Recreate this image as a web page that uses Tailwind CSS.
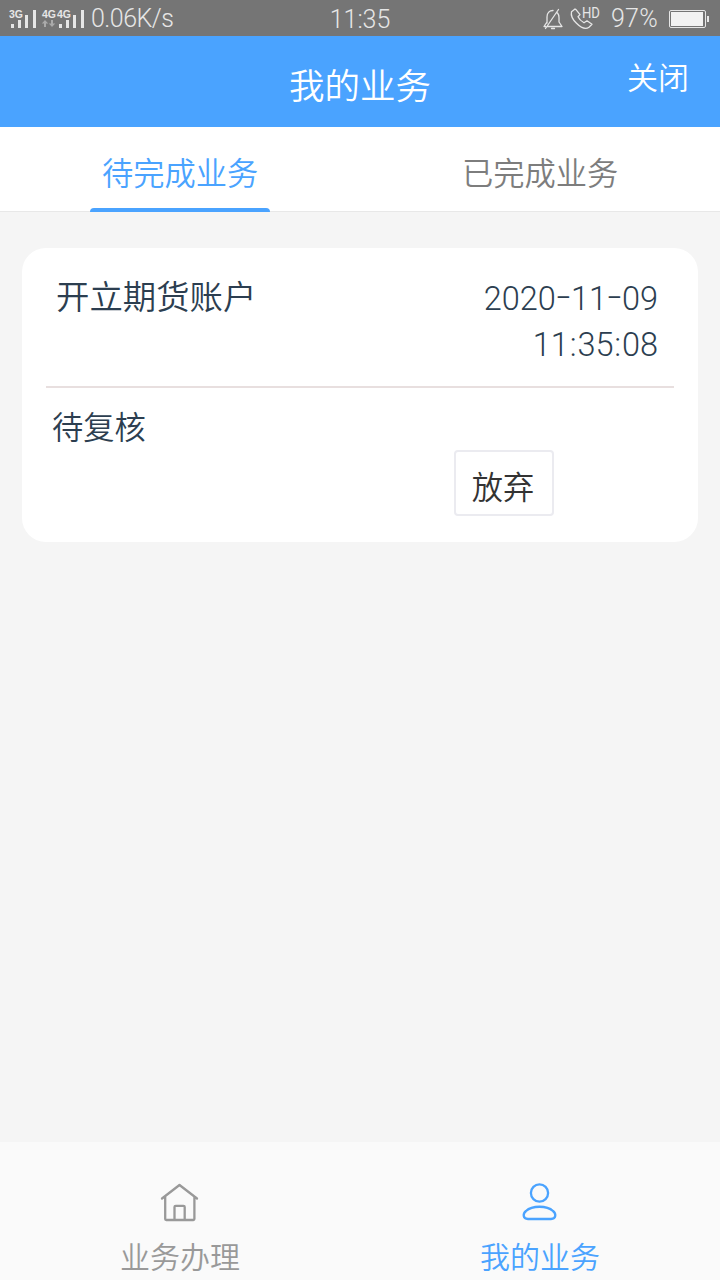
<!DOCTYPE html>
<html lang="zh-CN">
<head>
  <meta charset="UTF-8" />
  <meta name="viewport" content="width=device-width, initial-scale=1.0" />
  <title>我的业务</title>
  <script src="https://cdn.jsdelivr.net/npm/@tailwindcss/browser@4"></script>
</head>
<body class="h-screen flex flex-col overflow-hidden bg-[#f5f5f5] font-[350] font-[Roboto,'Noto_Sans_CJK_SC',sans-serif]">

  <!-- Status bar -->
  <div class="h-9 shrink-0 grid grid-cols-3 items-center bg-[#757575] text-[#e6e6e6] text-[25px] leading-9">
    <div class="flex items-center">
      <svg class="w-[91px] h-9 shrink-0" viewBox="0 0 91 36" fill="#e6e6e6">
        <g font-family="Liberation Sans" font-weight="bold" font-size="10">
          <text x="9" y="16.500" textLength="14" lengthAdjust="spacingAndGlyphs">3G</text>
          <text x="42" y="16.500" textLength="14" lengthAdjust="spacingAndGlyphs">4G</text>
          <text x="57" y="16.500" textLength="14" lengthAdjust="spacingAndGlyphs">4G</text>
        </g>
        <path d="M11 23h3v4h-3zM18 19h3v8h-3zM25 14h3v13h-3zM33 9h3v18h-3z" />
        <path d="M59 23h3v4h-3zM66 19h3v8h-3zM73 14h3v13h-3zM81 9h3v18h-3z" />
        <path d="M45 19l3.200 3.500h-2.200v3.500h-2v-3.500h-2.200zM52 26l3.200-3.500h-2.200v-3.500h-2v3.500h-2.200z" fill="#aaa" />
      </svg>
      <span class="tracking-[-0.5px]">0.06K/s</span>
    </div>
    <div class="text-center pt-0.5">11:35</div>
    <div class="flex items-center justify-end pr-[10px]">
      <svg class="w-[64px] h-9 shrink-0" viewBox="542 0 64 36" fill="none" stroke="#e6e6e6" stroke-width="1.3" stroke-linejoin="round" stroke-linecap="round">
        <path d="M549 22V16c0-4 2.500-6.500 6-6.500M559.500 12c1 1.200 1.500 2.500 1.500 4.500v4.500l3 4.500h-14.500M549 21l-3 4.500h1.500M560.500 8.500L547.500 27.500M553.500 27.500h3" />
        <path d="M577 8l-3.500 2.800c-1 4 1 7.500 5 11.500s9 6.500 12.500 4l3-3-5-3.500-3 2c-3.300-1.800-5-3.800-6-6l2-2.200-4-5z" />
        <text x="584" y="17" fill="#e6e6e6" stroke="none" font-family="Roboto" font-weight="400" font-size="15" textLength="18" lengthAdjust="spacingAndGlyphs">HD</text>
      </svg>
      <span class="ml-[7px] tracking-[0.3px]">97%</span>
      <svg class="ml-[10px] w-[42px] h-9 shrink-0" viewBox="668 0 42 36">
        <rect x="669.500" y="9.500" width="36" height="17" rx="1.500" fill="none" stroke="#e6e6e6" />
        <path d="M671 11h32v14h-32z" fill="#f2f2f2" />
        <path d="M707 15h2v6h-2z" fill="#e6e6e6" />
      </svg>
    </div>
  </div>

  <!-- Header -->
  <header class="h-[91px] shrink-0 grid grid-cols-[1fr_auto_1fr] bg-[#4aa3ff] text-white">
    <h1 class="col-start-2 pt-[25px] text-[35.500px] font-[350] leading-[52px]">我的业务</h1>
    <button class="justify-self-end self-start pt-[20px] pr-[31px] text-[31px] leading-[46px]">关闭</button>
  </header>

  <!-- Tabs -->
  <nav class="h-[85px] shrink-0 grid grid-cols-2 justify-items-center bg-white border-b border-[#e8e8e8] text-[31.250px] leading-[96px]">
    <a class="relative w-[180px] text-center text-[#4aa3ff]">待完成业务
      <span class="absolute left-0 top-[81px] w-full h-1 rounded-t bg-[#4aa3ff]"></span>
    </a>
    <a class="text-[#7d7d7d]">已完成业务</a>
  </nav>

  <!-- Business list -->
  <main class="flex-1 px-[22px] pt-9">
    <section class="h-[294px] rounded-[24px] bg-white px-6 pt-[27px] text-[#2c3e50]">
      <div class="h-[113px] flex justify-between border-b-2 border-[#e8dfdf] pl-[10px] pr-4 leading-[46px]">
        <h2 class="text-[33.400px] font-[350]">开立期货账户</h2>
        <div class="pt-px text-right text-[32.500px]">
          <p>2020<span class="inline-block w-[15px] text-center scale-x-150 -translate-y-0.5">-</span>11<span class="inline-block w-[15px] text-center scale-x-150 -translate-y-0.5">-</span>09</p>
          <p>11<span class="inline-block w-[8.500px] text-center">:</span>35<span class="inline-block w-[8.500px] text-center">:</span>08</p>
        </div>
      </div>
      <p class="pt-[19px] pl-[6px] text-[31.250px] leading-[43px]">待复核</p>
      <button class="block ml-[408px] w-[100px] h-[66px] rounded border-2 border-[#ebebf0] pr-0.5 pt-1 text-[31.250px] leading-[66px] text-[#333]">放弃</button>
    </section>
  </main>

  <!-- Bottom navigation -->
  <footer class="h-[138px] shrink-0 grid grid-cols-2 bg-[#fafafa] text-[30px] leading-[44px]">
    <a class="flex flex-col items-center pt-10 text-[#999]">
      <svg class="w-10 h-10" viewBox="0 0 40 40" fill="none" stroke="currentColor" stroke-width="2.300" stroke-linejoin="round" stroke-linecap="round">
        <path d="M2 16.500L19.500 3 37 16.500M5.200 14.500V37q0 1 1 1h27.200q1 0 1-1V14.500M14.500 38V25q0-1.200 1.200-1.200h7.800q1.200 0 1.200 1.200v13" />
      </svg>
      <span class="mt-[14px]">业务办理</span>
    </a>
    <a class="flex flex-col items-center pt-10 text-[#4aa3ff]">
      <svg class="w-10 h-10" viewBox="0 0 40 40" fill="none" stroke="currentColor" stroke-width="2.300">
        <circle cx="19.500" cy="11" r="8.600" />
        <path d="M8 37C2.500 37 2.800 31.500 6 29c6-5.700 21-5.700 27 0 3.200 2.500 3.500 8-2 8z" />
      </svg>
      <span class="mt-[14px]">我的业务</span>
    </a>
  </footer>

</body>
</html>
